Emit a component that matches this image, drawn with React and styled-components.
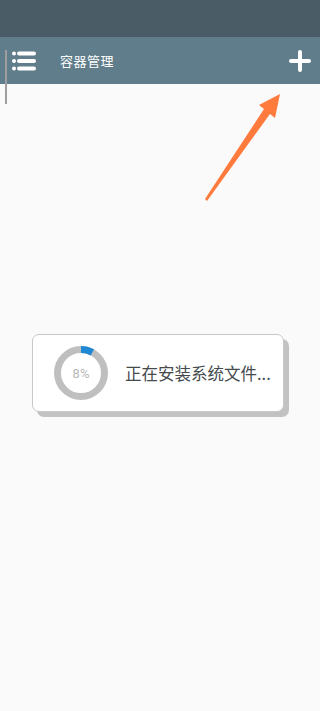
import React from 'react';
import styled, { createGlobalStyle } from 'styled-components';

const GlobalStyle = createGlobalStyle`
  html, body {
    margin: 0;
    padding: 0;
    background: #fafafa;
  }
  body {
    font-family: Roboto, "Noto Sans CJK SC", sans-serif;
  }
`;

const Screen = styled.div`
  position: relative;
  width: 320px;
  height: 711px;
  display: flex;
  flex-direction: column;
  background: #fafafa;
  overflow: hidden;
`;

const StatusBar = styled.div`
  height: 37px;
  background: #4a5d67;
`;

const Toolbar = styled.div`
  height: 47px;
  background: #607d8b;
  display: flex;
  align-items: center;
  padding: 0 9px 0 12px;
`;

const MenuButton = styled.div`
  width: 24px;
  display: flex;
  align-items: center;
`;

const Title = styled.div`
  margin-left: 24px;
  color: #fff;
  font-size: 13px;
  letter-spacing: 0.5px;
  flex: 1;
`;

const Content = styled.div`
  flex: 1;
  padding: 250px 0 0 32px;
`;

const ScrollIndicator = styled.div`
  position: absolute;
  left: 5px;
  top: 50px;
  width: 2px;
  height: 54px;
  background: #9e9e9e;
`;

const Arrow = styled.svg`
  position: absolute;
  left: 195px;
  top: 88px;
`;

const Dialog = styled.div`
  width: 252px;
  height: 78px;
  box-sizing: border-box;
  background: #fff;
  border: 1px solid #c8c8c8;
  border-radius: 7px;
  box-shadow: 5px 5px 0 #c2c2c2;
  display: flex;
  align-items: center;
  padding-left: 21px;
`;

const Ring = styled.div`
  position: relative;
  width: 54px;
  height: 54px;
`;

const RingLabel = styled.span`
  position: absolute;
  inset: 0;
  display: flex;
  align-items: center;
  justify-content: center;
  color: #b8b8b8;
  font-size: 13px;
`;

const Message = styled.div`
  margin-left: 17px;
  color: #454a4d;
  font-size: 16.5px;
  font-family: "Noto Sans CJK SC", sans-serif;
`;

const ProgressRing = ({ percent }) => {
  const r = 23.5;
  const c = 2 * Math.PI * r;
  return (
    <Ring>
      <svg width="54" height="54" viewBox="0 0 54 54">
        <circle cx="27" cy="27" r={r} fill="none" stroke="#bfbfbf" strokeWidth="7" />
        <circle
          cx="27"
          cy="27"
          r={r}
          fill="none"
          stroke="#1e88d4"
          strokeWidth="7"
          strokeDasharray={`${(c * percent) / 100} ${c}`}
          transform="rotate(-90 27 27)"
        />
      </svg>
      <RingLabel>{percent}%</RingLabel>
    </Ring>
  );
};

export default function App() {
  return (
    <>
      <GlobalStyle />
      <Screen>
        <StatusBar />
        <Toolbar>
          <MenuButton>
            <svg width="24" height="20" viewBox="0 0 24 20">
              <g fill="#fff">
                <circle cx="2" cy="2.5" r="2" />
                <circle cx="2" cy="10" r="2" />
                <circle cx="2" cy="17.5" r="2" />
              </g>
              <g stroke="#fff" strokeWidth="4" strokeLinecap="round">
                <line x1="7" y1="2.5" x2="22" y2="2.5" />
                <line x1="7" y1="10" x2="22" y2="10" />
                <line x1="7" y1="17.5" x2="22" y2="17.5" />
              </g>
            </svg>
          </MenuButton>
          <Title>容器管理</Title>
          <svg width="22" height="22" viewBox="0 0 22 22">
            <g stroke="#fff" strokeWidth="4" strokeLinecap="round">
              <line x1="11" y1="2" x2="11" y2="20" />
              <line x1="2" y1="11" x2="20" y2="11" />
            </g>
          </svg>
        </Toolbar>
        <Content>
          <Dialog>
            <ProgressRing percent={8} />
            <Message>正在安装系统文件...</Message>
          </Dialog>
        </Content>
        <ScrollIndicator />
        <Arrow width="95" height="120" viewBox="0 0 95 120">
          <polygon points="10,111 12,113 75,26 80,30 85,6 64,17 69,21" fill="#ff7a3d" />
        </Arrow>
      </Screen>
    </>
  );
}
